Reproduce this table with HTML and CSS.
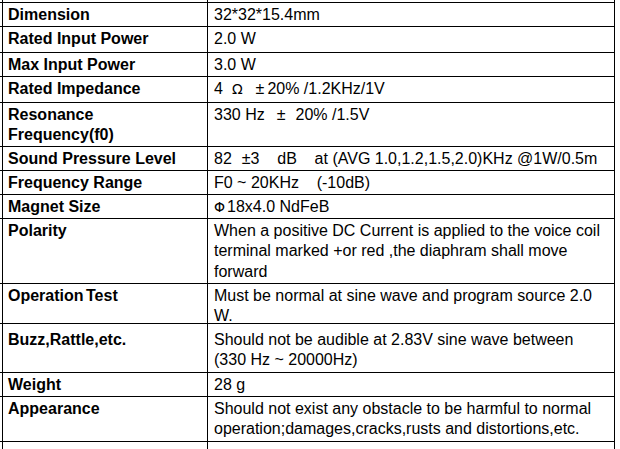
FILE: index.html
```html
<!DOCTYPE html>
<html lang="en">
<head>
<meta charset="utf-8">
<title>Speaker specification</title>
<link rel="stylesheet" href="styles.css">
</head>
<body>
<div class="sheet">
  <div class="row stub-top"><div class="k"></div><div class="v"></div></div>
  <div class="row h24"><div class="k">Dimension</div><div class="v">32*32*15.4mm</div></div>
  <div class="row h26"><div class="k">Rated Input Power</div><div class="v">2.0 W</div></div>
  <div class="row h24"><div class="k">Max Input Power</div><div class="v">3.0 W</div></div>
  <div class="row h26"><div class="k">Rated Impedance</div><div class="v">4<span class="sym ohm">Ω</span><span class="pm pm-imp">±</span>20% /1.2KHz/1V</div></div>
  <div class="row h44"><div class="k">Resonance<br>Frequency(f0)</div><div class="v">330 Hz<span class="pm pm-res">±</span>20% /1.5V</div></div>
  <div class="row h24"><div class="k">Sound Pressure Level</div><div class="v">82<span class="pm pm-spl">±</span>3&nbsp;&nbsp;&nbsp;&nbsp;dB&nbsp;&nbsp;&nbsp;&nbsp;at (AVG 1.0,1.2,1.5,2.0)KHz @1W/0.5m</div></div>
  <div class="row h24"><div class="k">Frequency Range</div><div class="v">F0 ~ 20KHz&nbsp;&nbsp;&nbsp;&nbsp;(-10dB)</div></div>
  <div class="row h24"><div class="k">Magnet Size</div><div class="v"><span class="sym phi">Φ</span>18x4.0 NdFeB</div></div>
  <div class="row h65"><div class="k">Polarity</div><div class="v">When a positive DC Current is applied to the voice coil<br>terminal marked +or red ,the diaphram shall move<br>forward</div></div>
  <div class="row h40"><div class="k">Operation<span class="tight"> </span>Test</div><div class="v">Must be normal at sine wave and program source 2.0<br>W.</div></div>
  <div class="row h49 low"><div class="k">Buzz,Rattle,etc.</div><div class="v">Should not be audible at 2.83V sine wave between<br>(330 Hz ~ 20000Hz)</div></div>
  <div class="row h24"><div class="k">Weight</div><div class="v">28 g</div></div>
  <div class="row h45"><div class="k">Appearance</div><div class="v">Should not exist any obstacle to be harmful to normal<br>operation;damages,cracks,rusts and distortions,etc.</div></div>
  <div class="row stub-bottom"><div class="k"></div><div class="v"></div></div>
</div>
</body>
</html>
```
FILE: styles.css
```css
* {
  box-sizing: border-box;
}

html,
body {
  margin: 0;
  height: 449px;
  overflow: hidden;
  background: #ffffff;
}

body {
  font-family: "Liberation Sans", Arial, sans-serif;
  font-size: 16px;
  line-height: 20.3px;
  color: #000000;
}

.sheet {
  width: 615px;
  border-right: 1px solid #000000;
}

.row {
  display: grid;
  grid-template-columns: 206px 1fr;
  padding-left: 2px;
  border-bottom: 1px solid #000000;
}

.k {
  border-left: 1px solid #000000;
  border-right: 1px solid #000000;
  padding: 2px 0 0 5px;
  font-weight: bold;
}

.v {
  padding: 2px 0 0 6px;
  white-space: nowrap;
}

.stub-top {
  height: 3px;
}

.stub-bottom {
  height: 20px;
  border-bottom: none;
}

.h24 { height: 24px; }
.h26 { height: 26px; }
.h40 { height: 40px; }
.h44 { height: 44px; }
.h45 { height: 45px; }
.h49 { height: 49px; }
.h65 { height: 65px; }

.low .k,
.low .v {
  padding-top: 6px;
}

.sym {
  font-family: "DejaVu Sans", "Liberation Sans", sans-serif;
  font-size: 14px;
  font-weight: normal;
}

.ohm {
  margin: 0 13px 0 9px;
}

.phi {
  margin-right: 2px;
}

.pm-imp {
  margin-right: 3px;
}

.pm-res {
  margin: 0 10px 0 12px;
}

.pm-spl {
  margin-left: 10px;
}

.tight {
  word-spacing: -2px;
}
```
